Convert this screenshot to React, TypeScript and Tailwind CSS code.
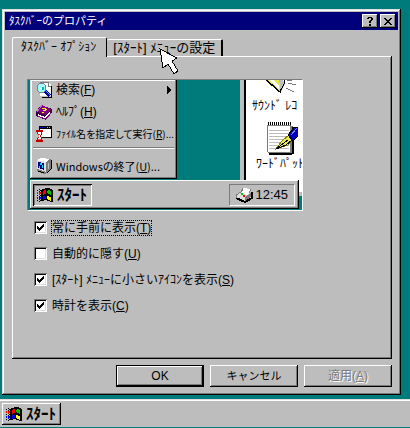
import { useState, ReactNode } from "react";

const raised =
  "bg-[#bdbdbd] shadow-[inset_-1px_-1px_#000,inset_1px_1px_#fff,inset_-2px_-2px_#7b7b7b]";
const windowEdge =
  "bg-[#bdbdbd] shadow-[inset_-1px_-1px_#000,inset_1px_1px_#dedede,inset_-2px_-2px_#7b7b7b,inset_2px_2px_#fff]";
const pressed =
  "bg-[#bdbdbd] shadow-[inset_1px_1px_#000,inset_-1px_-1px_#fff,inset_2px_2px_#7b7b7b]";

const COLORS: Record<string, string> = {
  K: "#000000",
  R: "#ff0000",
  G: "#00c000",
  B: "#0000ff",
  Y: "#ffff00",
};

const FLAG = [
  "........KKKKK...",
  "..K..KKKKKKKKKK.",
  "K..KKKKRRKKGGKKK",
  "..K.KKRRRKGGGGKK",
  "R.RRKKRRRKGGGGKK",
  "R.RRKKRRRKKGGGKK",
  "..R.KKRKKKKKKGKK",
  "K..KKKKKKKKKKKKK",
  "..K.KKBBBKYYKKKK",
  "B.BBKKBBBKYYYYKK",
  "B.BBKKBBBKYYYYKK",
  "..B.KKBKKKKYYYKK",
  "K..KKKK...KKKYKK",
  "..K..........KKK",
];

const CHECK = [
  "......K",
  ".....KK",
  "K...KKK",
  "KK.KKK.",
  "KKKKK..",
  ".KKK...",
  "..K....",
];

const QUESTION = [
  ".KKKK.",
  "KK..KK",
  "....KK",
  "...KK.",
  "..KK..",
  "..KK..",
  "......",
  "..KK..",
  "..KK..",
];

const CLOSE = [
  "KK....KK",
  ".KK..KK.",
  "..KKKK..",
  "...KK...",
  "..KKKK..",
  ".KK..KK.",
  "KK....KK",
];

const Sprite = ({ rows, className }: { rows: string[]; className?: string }) => (
  <svg
    width={rows[0].length}
    height={rows.length}
    shapeRendering="crispEdges"
    className={className}
    aria-hidden="true"
  >
    {rows.map((row, y) =>
      row.split("").map((c, x) =>
        c === "." ? null : (
          <rect key={`${x}-${y}`} x={x} y={y} width="1" height="1" fill={COLORS[c]} />
        )
      )
    )}
  </svg>
);

const SearchIcon = () => (
  <svg width="16" height="16" shapeRendering="crispEdges" className="shrink-0">
    <path d="M4 0h8l3 3v11H4z" fill="#fff" />
    <path d="M4 0h8M4 0v2M12 0v4h3" stroke="#7b7b7b" fill="none" />
    <path d="M15 4v11H6" stroke="#000" fill="none" />
    <path d="M9 9l5 5" stroke="#0000a0" strokeWidth="3" />
    <path d="M9 8l5 5" stroke="#4aa0ff" />
    <circle cx="5.500" cy="6" r="4.500" fill="#9ff" stroke="#7b7b9b" />
    <path d="M3 6h2v-2h2v4H5z" fill="#fff" />
    <path d="M6 5h2v3H6z" fill="#00b0c8" />
  </svg>
);

const HelpIcon = () => (
  <svg width="16" height="16" shapeRendering="crispEdges" className="shrink-0">
    <path d="M5 1l11 4v3l-6 8-10-4V8z" fill="#400040" />
    <path d="M6 1l9 4-5 6-9-3z" fill="#800080" />
    <path d="M6 1L1 8" stroke="#d060d0" />
    <path d="M2 10l7 3 5-6v2l-5 6-7-3z" fill="#fff" />
    <path d="M1 12l9 3 5-6" stroke="#800080" fill="none" />
    <path d="M6 4h4v1H6zM9 5h2v1H9zM7 6h3v1H7zM6 8h2v1H6z" fill="#ff0" />
  </svg>
);

const RunIcon = () => (
  <svg width="16" height="16" shapeRendering="crispEdges" className="shrink-0">
    <path d="M3 0h13v12H3z" fill="#000" />
    <path d="M4 3h11v8H4z" fill="#fff" />
    <path d="M4 1h6v1H4z" fill="#0000c0" />
    <path d="M11 1h1v1h-1zM13 1h1v1h-1z" fill="#bdbdbd" />
    <path d="M0 4h7v2H6v2L4 10l2 2v2h1v2H0v-2h1v-2l2-2-2-2V6H0z" fill="#c00000" />
    <path d="M2 6h3v2L4 9v2l1 1v1H2v-1l1-1V9L2 8z" fill="#fff" />
    <path d="M3 8h1v1H3zM2 13h3v1H2z" fill="#ff4040" />
  </svg>
);

const ShutdownIcon = () => (
  <svg width="16" height="16" shapeRendering="crispEdges" className="shrink-0">
    <path d="M5 0l9 1 1 1v9l-4 4-3 1-7-3V2z" fill="#7b7b7b" />
    <path d="M1 2l9 2v10L1 11z" fill="#dedede" />
    <path d="M5 0l9 1-4 3-9-2z" fill="#fff" />
    <path d="M2 4l6 1v7l-6-2z" fill="#000080" />
    <path d="M4 5h2v2H4zM6 7h1v3H6zM3 8h1v2H3z" fill="#00e0ff" />
    <path d="M15 2v9l-4 4M2 13l6 2" stroke="#000" fill="none" />
    <path d="M12 5h1v6h-1z" fill="#bdbdbd" />
  </svg>
);

const PrinterIcon = () => (
  <svg width="17" height="16" shapeRendering="crispEdges">
    <path d="M7 1l8 1-3 6-7-2z" fill="#fff" />
    <path d="M7 1L5 6M15 2l-2 4" stroke="#7b7b7b" />
    <path d="M0 8l5-3 8 4 3-4v6l-7 4-9-4z" fill="#dedede" />
    <path d="M0 11l9 4 7-4V5" stroke="#000" fill="none" strokeWidth="2" />
    <path d="M0 8l5-3M0 8v3" stroke="#7b7b7b" />
    <path d="M9 10l6-4v4l-6 4z" fill="#7b7b7b" />
    <path d="M5 6h2v2H5z" fill="#00c000" />
    <path d="M7 8h2v2H7z" fill="#f00" />
  </svg>
);

const SpeakerIcon = () => (
  <svg width="36" height="14" shapeRendering="crispEdges">
    <path d="M1 0h18l-2 13L8 6z" fill="#000" />
    <path d="M3 0h13v11L8 4z" fill="#e7e75a" />
    <path d="M6 0h3l6 6v4z" fill="#fff" />
    <path d="M15 0h4l2 4-4 8z" fill="#bdbdbd" />
    <path d="M20 0v4l-4 8M8 5l7 7" stroke="#000" fill="none" />
    <path d="M24 3l8 2M22 8l8 4M23 0h5" stroke="#7b7b7b" />
  </svg>
);

const NotepadIcon = () => (
  <svg width="32" height="33" shapeRendering="crispEdges">
    <path d="M2 4h25v28H4l-2-2z" fill="#7b7b7b" />
    <path d="M27 5v26l-2 1H3" stroke="#000" strokeWidth="2" fill="none" />
    <path d="M1 3h23v27H2z" fill="#fff" stroke="#7b7b7b" />
    <path d="M3 8h20M3 11h20M3 14h20M3 17h20M3 20h20M3 23h20M3 26h20" stroke="#bdbdbd" />
    <path d="M2 1.500h24" stroke="#000" strokeWidth="3" strokeDasharray="1 1" />
    <path d="M10 27l6-8 7-6 4 4-5 6z" fill="#e7e75a" stroke="#7b7b00" />
    <path d="M10 27l12-9M10 27l10-4 6-5" stroke="#000" fill="none" />
    <path d="M22 13l7-8h3v9l-5 5z" fill="#0000c0" stroke="#000" />
    <path d="M25 13l6-7" stroke="#8080ff" />
  </svg>
);

const Pointer = () => (
  <svg
    width="22"
    height="28"
    shapeRendering="crispEdges"
    className="absolute left-[159px] top-[48px] z-20 pointer-events-none"
    aria-hidden="true"
  >
    <path
      d="M1 1l17 9-5 3 6 10-4 3-6-10-5 4z"
      fill="#fff"
      stroke="#000"
    />
  </svg>
);

const MenuItem = ({ icon, children }: { icon: ReactNode; children: ReactNode }) => (
  <div className="flex items-center gap-1 h-[22px] px-1.5 whitespace-nowrap">
    {icon}
    {children}
  </div>
);

const Start = () => (
  <>
    <Sprite rows={FLAG} />
    <span className="text-[15px] leading-4 font-bold">ｽﾀｰﾄ</span>
  </>
);

const Preview = () => (
  <div className="relative w-[276px] h-[132px] overflow-hidden bg-[#007b7b] border border-t-[#7b7b7b] border-l-[#7b7b7b] border-r-white border-b-white">
    <div className="absolute left-[212px] top-0 w-[80px] h-[116px] bg-white border-l-4 border-b-4 border-[#bdbdbd]">
      <div className="h-full border-l-2 border-black pl-1.5 whitespace-nowrap">
        <div className="pl-3">
          <SpeakerIcon />
        </div>
        <p className="mt-1 leading-[16px]">ｻｳﾝﾄﾞ ﾚｺ</p>
        <div className="mt-2 pl-3.5">
          <NotepadIcon />
        </div>
        <p className="mt-px pl-1 leading-[16px]">ﾜｰﾄﾞﾊﾟｯﾄ</p>
      </div>
    </div>
    <div className={`absolute left-[2px] -top-px w-[147px] h-[100px] ${windowEdge}`}>
      <MenuItem icon={<SearchIcon />}>
        <span>
          検索(<u>F</u>)
        </span>
        <svg width="4" height="8" className="ml-auto" shapeRendering="crispEdges">
          <path d="M0 0l4 4-4 4z" />
        </svg>
      </MenuItem>
      <MenuItem icon={<HelpIcon />}>
        <span>
          ﾍﾙﾌﾟ(<u>H</u>)
        </span>
      </MenuItem>
      <MenuItem icon={<RunIcon />}>
        <span className="text-[10px] [font-feature-settings:'palt'] font-['Noto_Sans_CJK_JP',sans-serif]">
          ﾌｧｲﾙ名を指定して実行(<u>R</u>)...
        </span>
      </MenuItem>
      <div className="mx-[3px] mt-0.5 mb-1.5 border-t border-t-[#7b7b7b] border-b border-b-white" />
      <MenuItem icon={<ShutdownIcon />}>
        <span className="text-[11px] [font-feature-settings:'palt'] font-['Noto_Sans_CJK_JP',sans-serif]">
          Windowsの終了(<u>U</u>)...
        </span>
      </MenuItem>
    </div>
    <div
      className={`absolute left-[2px] bottom-px w-[269px] h-[29px] flex items-center justify-between pl-[3px] pr-1 ${raised}`}
    >
      <div className={`flex items-center gap-1 h-[22px] w-[59px] pl-1 ${pressed}`}>
        <Start />
      </div>
      <div className="flex items-center gap-0.5 h-[22px] px-1.5 border border-t-[#7b7b7b] border-l-[#7b7b7b] border-r-white border-b-white">
        <PrinterIcon />
        <span className="text-[13px]">12:45</span>
      </div>
    </div>
  </div>
);

const CheckOption = ({
  initial,
  focused,
  children,
}: {
  initial: boolean;
  focused?: boolean;
  children: ReactNode;
}) => {
  const [checked, setChecked] = useState(initial);
  return (
    <label className="flex items-center gap-1 h-[13px] whitespace-nowrap">
      <span className="relative w-[13px] h-[13px]">
        <input
          type="checkbox"
          checked={checked}
          onChange={(e) => setChecked(e.target.checked)}
          className="block w-[13px] h-[13px] appearance-none bg-white shadow-[inset_1px_1px_#7b7b7b,inset_-1px_-1px_#fff,inset_2px_2px_#000,inset_-2px_-2px_#dedede]"
        />
        {checked && (
          <Sprite rows={CHECK} className="absolute left-[3px] top-[3px] pointer-events-none" />
        )}
      </span>
      <span
        className={
          focused
            ? "leading-[14px] border border-dotted border-black"
            : "px-px leading-[16px]"
        }
      >
        {children}
      </span>
    </label>
  );
};

export default function App() {
  return (
    <div className="relative min-h-screen flex flex-col bg-[#007b7b] pb-px overflow-hidden text-black text-[12px] leading-[14px] font-['Liberation_Sans','Noto_Sans_CJK_JP',sans-serif]">
      <main className={`ml-[2px] mr-[9px] mt-[9px] p-[3px] ${windowEdge}`}>
        <header className="flex items-center h-[18px] pl-1 pr-0.5 bg-[#00007b] text-white">
          <h1 className="flex-1 text-[11px]">ﾀｽｸﾊﾞｰのプロパティ</h1>
          <div className="flex gap-0.5">
            <button
              aria-label="ヘルプ"
              className={`flex items-center justify-center w-4 h-[14px] ${raised}`}
            >
              <Sprite rows={QUESTION} />
            </button>
            <button
              aria-label="閉じる"
              className={`flex items-center justify-center w-4 h-[14px] ${raised}`}
            >
              <Sprite rows={CLOSE} />
            </button>
          </div>
        </header>

        <div className="pl-[7px] pr-1.5 pt-[7px] pb-[5px]">
          <div role="tablist" className="flex items-end whitespace-nowrap">
            <button
              role="tab"
              aria-selected="true"
              className="relative z-10 -mb-px h-5 pl-2 pr-2.5 pb-0.5 bg-[#bdbdbd] rounded-t-[2px] border-t border-l border-white border-r border-r-black"
            >
              ﾀｽｸﾊﾞｰ ｵﾌﾟｼｮﾝ
            </button>
            <button
              role="tab"
              aria-selected="false"
              className="h-[17px] px-1.5 text-[13px] rounded-t-[2px] border-t border-white border-r-2 border-r-black"
            >
              [ｽﾀｰﾄ] ﾒﾆｭｰの設定
            </button>
          </div>

          <section
            role="tabpanel"
            className={`flex flex-col px-[15px] pt-[23px] pb-[47px] ${raised}`}
          >
            <Preview />
            <div className="flex flex-col gap-[13px] pl-[7px] pt-2.5">
              <CheckOption initial={true} focused>
                常に手前に表示(<u>T</u>)
              </CheckOption>
              <CheckOption initial={false}>
                自動的に隠す(<u>U</u>)
              </CheckOption>
              <CheckOption initial={true}>
                [ｽﾀｰﾄ] ﾒﾆｭｰに小さいｱｲｺﾝを表示(<u>S</u>)
              </CheckOption>
              <CheckOption initial={true}>
                時計を表示(<u>C</u>)
              </CheckOption>
            </div>
          </section>

          <footer className="flex justify-end gap-1.5 pt-1.5">
            <button className={`w-[88px] h-[22px] border border-black ${raised}`}>OK</button>
            <button className={`w-[88px] h-[22px] text-[11px] ${raised}`}>キャンセル</button>
            <button
              disabled
              className={`w-[88px] h-[22px] text-[#7b7b7b] [text-shadow:1px_1px_#fff] ${raised}`}
            >
              適用(<u>A</u>)
            </button>
          </footer>
        </div>
      </main>

      <nav className="flex items-center mt-auto h-7 pl-0.5 bg-[#bdbdbd] border-t border-[#dedede] shadow-[inset_0_1px_#fff]">
        <button className={`flex items-center gap-1 w-[59px] h-[22px] pl-1 ${raised}`}>
          <Start />
        </button>
      </nav>
      <Pointer />
    </div>
  );
}
